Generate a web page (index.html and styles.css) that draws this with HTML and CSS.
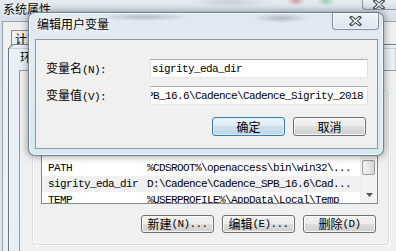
FILE: index.html
```html
<!DOCTYPE html>
<html lang="zh-CN">
<head>
<meta charset="utf-8">
<title>编辑用户变量</title>
<link rel="stylesheet" href="styles.css">
</head>
<body>
  <!-- 系统属性 -->
  <div class="win sys">
    <div class="sys-title">
      <span class="caption">系统属性</span>
      <span class="sys-close">
        <svg width="12" height="9" viewBox="0 0 12 9"><path d="M2 1 L10 8 M10 1 L2 8" stroke="#3a4450" stroke-width="3.2" stroke-linecap="square"/><path d="M2 1 L10 8 M10 1 L2 8" stroke="#fff" stroke-width="1.4"/></svg>
      </span>
    </div>
    <div class="sys-client">
      <div class="tabs">
        <span class="tab">计算机名</span>
      </div>
      <div class="tabpage"></div>
    </div>
  </div>

  <!-- 环境变量 -->
  <div class="win env">
    <div class="env-title">环境变量</div>
    <div class="env-client">
      <div class="group">
        <div class="list">
          <div class="lhead"></div>
          <div class="lrow"></div>
          <div class="lrow mono"><span class="c1">LM_LICENSE_FILE</span></div>
          <div class="lrow mono"><span class="c1">PATH</span><span class="c2">%CDSROOT%\openaccess\bin\win32\...</span></div>
          <div class="lrow mono sel"><span class="c1">sigrity_eda_dir</span><span class="c2">D:\Cadence\Cadence_SPB_16.6\Cad...</span></div>
          <div class="lrow mono"><span class="c1">TEMP</span><span class="c2">%USERPROFILE%\AppData\Local\Temp</span></div>
          <div class="vscroll">
            <span class="sb-btn"><svg width="7" height="4" viewBox="0 0 7 4"><path d="M0 4 L3.5 0 L7 4Z" fill="#555"/></svg></span>
            <span class="sb-track"><span class="sb-thumb"></span></span>
            <span class="sb-btn"><svg width="7" height="4" viewBox="0 0 7 4"><path d="M0 0 L3.5 4 L7 0Z" fill="#555"/></svg></span>
          </div>
        </div>
        <div class="btnrow">
          <button class="btn">新建<span class="mono">(N)...</span></button>
          <button class="btn">编辑<span class="mono">(E)...</span></button>
          <button class="btn">删除<span class="mono">(D)</span></button>
        </div>
      </div>
    </div>
  </div>

  <!-- 编辑用户变量 -->
  <div class="win edit">
    <div class="edit-title">编辑用户变量</div>
    <span class="edit-close">
      <svg width="13" height="10" viewBox="0 0 13 10"><path d="M2.5 1.5 L10.5 8.5 M10.5 1.5 L2.5 8.5" stroke="#3a4450" stroke-width="3.4" stroke-linecap="square"/><path d="M2.5 1.5 L10.5 8.5 M10.5 1.5 L2.5 8.5" stroke="#fff" stroke-width="1.5"/></svg>
    </span>
    <div class="edit-client">
      <div class="fields">
        <label class="lbl">变量名<span class="mono">(N):</span></label>
        <div class="input mono">sigrity_eda_dir</div>
        <label class="lbl">变量值<span class="mono">(V):</span></label>
        <div class="input mono end"><span>D:\Cadence\Cadence_SPB_16.6\Cadence\Cadence_Sigrity_2018</span></div>
      </div>
      <div class="btns">
        <button class="btn default">确定</button>
        <button class="btn">取消</button>
      </div>
    </div>
  </div>
</body>
</html>
```

FILE: styles.css
```css
* { box-sizing: border-box; margin: 0; padding: 0; }
html, body { width: 396px; height: 251px; overflow: hidden; }
body {
  position: relative;
  background: #d6e1ec;
  font-family: "Noto Sans CJK SC", "Liberation Sans", sans-serif;
  font-size: 12px;
  color: #000;
}
.mono {
  font-family: "Liberation Mono", "Noto Sans CJK SC", monospace;
  font-size: 11px;
  letter-spacing: -0.6px;
}
.win { position: absolute; }

/* ---------- 系统属性 ---------- */
.sys {
  left: 0; top: 0; width: 396px; height: 251px;
  display: flex; flex-direction: column;
  background:
    radial-gradient(ellipse 9px 5px at 296px 1px, rgba(214, 92, 92, .55), transparent),
    radial-gradient(ellipse 9px 5px at 326px 1px, rgba(96, 178, 110, .5), transparent),
    radial-gradient(ellipse 40px 5px at 230px 2px, rgba(120, 130, 140, .25), transparent),
    linear-gradient(#e3eaf1, #d4dfe9 22px, #dce6ef);
}
.sys-title {
  height: 21px; position: relative;
  padding-left: 3px;
  line-height: 18px;
}
.caption { text-shadow: 0 0 6px #fff, 0 0 3px #fff; }
.sys-close {
  position: absolute; top: -1px; right: -8px;
  width: 42px; height: 11px;
  border: 1px solid rgba(70, 85, 100, .55);
  border-top: none;
  border-radius: 0 0 4px 4px;
  background: linear-gradient(rgba(255,255,255,.35), rgba(200,212,224,.4));
  display: flex; justify-content: center; align-items: center;
  padding-right: 8px;
}
.sys-close svg { display: block; }
.sys-client {
  flex: 1;
  margin-left: 2px;
  background: #f0f0f0;
  border-left: 1px solid #97a3ae;
  border-top: 1px solid #97a3ae;
  padding: 8px 0 0 8px;
  display: flex; flex-direction: column;
}
.tabs { display: flex; height: 18px; }
.tab {
  border: 1px solid #898c95;
  border-bottom: none;
  margin-right: -1px;
  padding: 0 5px 0 3px;
  line-height: 16px;
  background: linear-gradient(#f3f3f3, #e6e6e6);
}
.tabpage {
  flex: 1;
  margin-left: -3px;
  border: 1px solid #898c95;
  background: #fafafa;
}

/* ---------- 环境变量 ---------- */
.env {
  left: 8px; top: 44px; width: 404px; height: 207px;
  border: 1px solid rgba(60, 75, 92, .7);
  border-bottom: none;
  border-radius: 7px 7px 0 0;
  background: linear-gradient(rgba(226, 236, 246, .72), rgba(222, 236, 245, .8));
  box-shadow: inset 0 0 0 1px rgba(255,255,255,.55);
  padding-left: 10px;
  display: flex; flex-direction: column;
}
.env-title {
  height: 25px;
  padding-left: 1px;
  line-height: 24px;
  text-shadow: 0 0 6px #fff;
}
.env-client {
  flex: 1;
  background: #f0f0f0;
  border: 1px solid #8e9aa6;
  border-bottom: none;
  padding: 20px 0 0 12px;
}
.group {
  width: 357px;
  border: 1px solid #d5dfe5;
  box-shadow: 1px 1px 0 #fff, inset 1px 1px 0 #fff;
  border-radius: 3px;
  padding: 17px 10px 11px 8px;
}
.list {
  position: relative;
  height: 95px;
  border: 1px solid #828790;
  background: #fff;
  overflow: hidden;
}
.lhead {
  height: 18px;
  border-bottom: 1px solid #e5e5e5;
}
.lrow {
  height: 16px; display: flex;
  padding-left: 6px;
  line-height: 14px;
  padding-top: 1px;
  white-space: nowrap;
}
.lrow.sel { background: #f0f0f0; margin-right: 17px; }
.c1 { width: 99px; flex: none; }
.c2 { flex: none; }
.vscroll {
  position: absolute; top: 0; right: 0; bottom: 0; width: 17px;
  background: #f2f2f2;
  border-left: 1px solid #ececec;
  display: flex; flex-direction: column;
}
.sb-btn {
  height: 17px; flex: none;
  display: flex; align-items: center; justify-content: center;
}
.sb-track { flex: 1; position: relative; }
.sb-thumb {
  position: absolute; left: 1px; right: 2px; top: 33px; height: 15px;
  border: 1px solid #9c9c9c; border-radius: 2px;
  background: linear-gradient(90deg, #f4f4f4, #e6e6e6 50%, #d8d8d8);
}
.btnrow {
  display: flex; justify-content: flex-end; gap: 8px;
  margin-top: 11px; padding-right: 2px;
}

/* ---------- buttons ---------- */
.btn {
  width: 73px; height: 18px;
  border: 1px solid #707070;
  border-radius: 3px;
  background: linear-gradient(#f2f2f2 0, #ebebeb 50%, #dddddd 50%, #cfcfcf 100%);
  box-shadow: inset 0 0 0 1px rgba(255,255,255,.8);
  font: inherit;
  line-height: 14px;
  color: #000;
  display: flex; align-items: center; justify-content: center;
}
.btn.default {
  border-color: #3c7fb1;
  background: linear-gradient(#edf5fb 0, #e1ecf5 50%, #cfdfed 50%, #c3d6e7 100%);
  box-shadow: inset 0 0 0 1px rgba(210, 240, 255, .9);
}

/* ---------- 编辑用户变量 ---------- */
.edit {
  left: 28px; top: 12px; width: 356px; height: 144px;
  border: 1px solid rgba(40, 58, 78, .6);
  border-radius: 7px;
  background:
    radial-gradient(ellipse 45px 4px at 115px 4px, rgba(90, 100, 112, .35), transparent),
    radial-gradient(ellipse 28px 5px at 252px 5px, rgba(90, 100, 112, .35), transparent),
    linear-gradient(#dfe8f1, #e2ebf3 30px, #dae8f1 130px, #d4eaf2);
  box-shadow: 0 0 7px 1px rgba(0, 0, 0, .35), inset 0 0 0 1px rgba(255,255,255,.6);
  padding: 0 5px 6px 6px;
  display: flex; flex-direction: column;
}
.edit-title {
  height: 26px;
  padding: 4px 0 0 2px;
  line-height: 14px;
  text-shadow: 0 0 6px #fff, 0 0 3px #fff;
}
.edit-close {
  position: absolute; top: -1px; right: 4px;
  width: 47px; height: 18px;
  border: 1px solid rgba(60, 76, 94, .6);
  border-radius: 0 0 4px 4px;
  background: linear-gradient(rgba(255,255,255,.45), rgba(214,226,238,.5));
  box-shadow: inset 0 0 0 1px rgba(255,255,255,.5);
  display: flex; align-items: center; justify-content: center;
}
.edit-close svg { display: block; }
.edit-client {
  flex: 1;
  background: #f0f0f0;
  border: 1px solid #8b98a7;
  padding: 19px 0 0 10px;
}
.fields {
  display: grid;
  grid-template-columns: 104px 218px;
  grid-auto-rows: 19px;
  row-gap: 8px;
  align-items: center;
}
.lbl { line-height: 14px; }
.input {
  height: 19px;
  border: 1px solid;
  border-color: #abadb3 #dbdfe6 #e3e9ef #e2e3ea;
  background: #fff;
  padding: 0 3px 0 1px;
  display: flex; align-items: center;
  overflow: hidden;
  white-space: nowrap;
}
.input.end { justify-content: flex-end; padding-right: 4px; }
.input.end span { flex: none; }
.btns {
  display: flex; justify-content: flex-end; gap: 8px;
  margin-top: 12px; padding-right: 11px;
}
.btns .btn { height: 19px; }
```
